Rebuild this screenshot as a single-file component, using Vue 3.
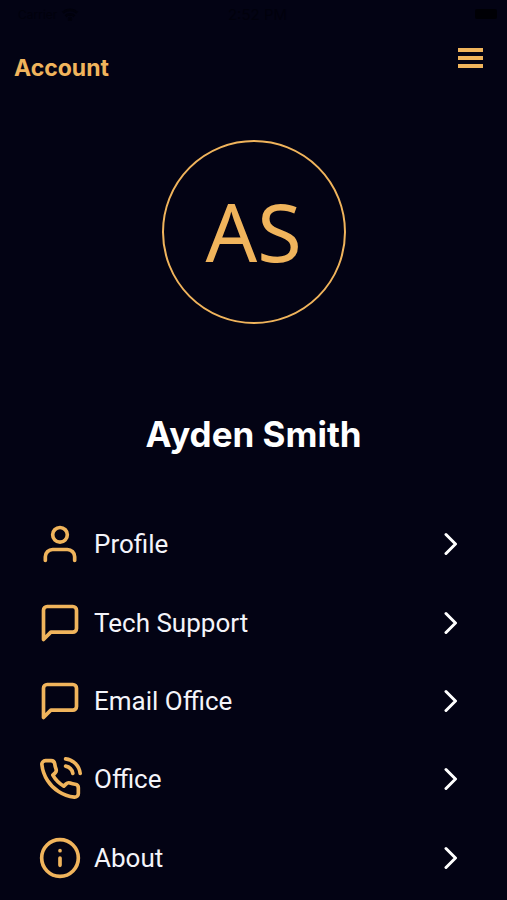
<template>
  <div class="screen">
    <div class="status-bar">
      <div class="carrier">
        <span>Carrier</span>
        <svg class="wifi" viewBox="0 0 20 14" aria-hidden="true">
          <path d="M2 5a12 12 0 0 1 16 0M5 9a7 7 0 0 1 10 0" />
          <circle cx="10" cy="12" r="1" />
        </svg>
      </div>
      <span class="time">2:52 PM</span>
      <span class="battery"></span>
    </div>

    <header class="header">
      <h1 class="page-title">Account</h1>
      <button class="menu-btn" type="button" aria-label="Menu">
        <span></span>
        <span></span>
        <span></span>
      </button>
    </header>

    <section class="user">
      <div class="avatar">{{ initials }}</div>
      <h2 class="name">{{ name }}</h2>
    </section>

    <nav class="menu">
      <a v-for="item in items" :key="item.label" class="menu-item" href="#">
        <svg class="icon" viewBox="0 0 24 24" aria-hidden="true">
          <path v-for="d in icons[item.icon]" :key="d" :d="d" />
        </svg>
        <span class="label">{{ item.label }}</span>
        <svg class="chevron" viewBox="0 0 14 24" aria-hidden="true">
          <path d="M2 2.5l9.5 9.5L2 21.5" />
        </svg>
      </a>
    </nav>
  </div>
</template>

<script setup>
import { computed } from 'vue';

const name = 'Ayden Smith';

const initials = computed(() => name.split(' ').map((part) => part[0]).join(''));

const items = [
  { label: 'Profile', icon: 'user' },
  { label: 'Tech Support', icon: 'message' },
  { label: 'Email Office', icon: 'message' },
  { label: 'Office', icon: 'phone' },
  { label: 'About', icon: 'info' }
];

const icons = {
  user: [
    'M20 21v-2a4 4 0 0 0-4-4H8a4 4 0 0 0-4 4v2',
    'M16 7a4 4 0 1 1-8 0 4 4 0 0 1 8 0z'
  ],
  message: ['M21 15a2 2 0 0 1-2 2H7l-4 4V5a2 2 0 0 1 2-2h14a2 2 0 0 1 2 2z'],
  phone: [
    'M15.05 5A5 5 0 0 1 19 8.95M15.05 1A9 9 0 0 1 23 8.94',
    'M22 16.92v3a2 2 0 0 1-2.18 2 19.79 19.79 0 0 1-8.63-3.07 19.5 19.5 0 0 1-6-6 19.79 19.79 0 0 1-3.07-8.67A2 2 0 0 1 4.11 2h3a2 2 0 0 1 2 1.72 12.84 12.84 0 0 0 .7 2.81 2 2 0 0 1-.45 2.11L8.09 9.91a16 16 0 0 0 6 6l1.27-1.27a2 2 0 0 1 2.11-.45 12.84 12.84 0 0 0 2.81.7A2 2 0 0 1 22 16.92z'
  ],
  info: [
    'M22 12a10 10 0 1 1-20 0 10 10 0 0 1 20 0z',
    'M12 16v-4M12 8h.01'
  ]
};
</script>

<style>
body {
  margin: 0;
  background-color: #030314;
}
</style>

<style scoped>
.screen {
  min-height: 100vh;
  box-sizing: border-box;
  padding-bottom: 3px;
  display: flex;
  flex-direction: column;
  background-color: #030314;
  color: #fff;
  font-family: Inter, "Liberation Sans", sans-serif;
}

.status-bar {
  height: 28px;
  padding: 0 10px 0 18px;
  display: grid;
  grid-template-columns: 1fr auto 1fr;
  align-items: center;
  color: #01010c;
  font-size: 15px;
}

.carrier {
  display: flex;
  align-items: center;
  gap: 4px;
  font-size: 12px;
}

.wifi {
  width: 18px;
  height: 13px;
  fill: none;
  stroke: currentColor;
  stroke-width: 3;
}

.battery {
  justify-self: end;
  width: 22px;
  height: 10px;
  border-radius: 2px;
  background-color: #000005;
}

.header {
  height: 76px;
  padding: 0 24px 0 14px;
  display: flex;
  justify-content: space-between;
  align-items: flex-start;
}

.page-title {
  margin: 24px 0 0;
  font-size: 23px;
  line-height: 32px;
  font-weight: 700;
  color: #f0b45c;
}

.menu-btn {
  margin-top: 20px;
  padding: 0;
  width: 25px;
  height: 20px;
  display: flex;
  flex-direction: column;
  justify-content: space-between;
  border: none;
  background: none;
  cursor: pointer;
}

.menu-btn span {
  height: 4px;
  background-color: #f0b45c;
}

.user {
  padding-top: 36px;
  display: flex;
  flex-direction: column;
  align-items: center;
}

.avatar {
  box-sizing: border-box;
  width: 184px;
  height: 184px;
  padding-bottom: 4px;
  display: flex;
  justify-content: center;
  align-items: center;
  border: 2px solid #f0b45c;
  border-radius: 50%;
  font-family: "Noto Sans", sans-serif;
  font-size: 81px;
  color: #f0b45c;
}

.name {
  margin: 88px 0 49px;
  font-size: 35px;
  line-height: 44px;
  font-weight: 700;
}

.menu {
  flex: 1;
  padding: 0 49px 0 38px;
  display: grid;
  grid-auto-rows: 1fr;
}

.menu-item {
  display: flex;
  align-items: center;
  color: #f4f4fa;
  text-decoration: none;
}

.icon {
  width: 44px;
  height: 44px;
  fill: none;
  stroke: #f0b45c;
  stroke-width: 2;
  stroke-linecap: round;
  stroke-linejoin: round;
}

.label {
  flex: 1;
  margin-left: 12px;
  font-family: Roboto, "Liberation Sans", sans-serif;
  font-size: 26px;
  line-height: 32px;
}

.chevron {
  width: 14px;
  height: 24px;
  fill: none;
  stroke: #fff;
  stroke-width: 3;
  stroke-linecap: round;
  stroke-linejoin: round;
}
</style>
